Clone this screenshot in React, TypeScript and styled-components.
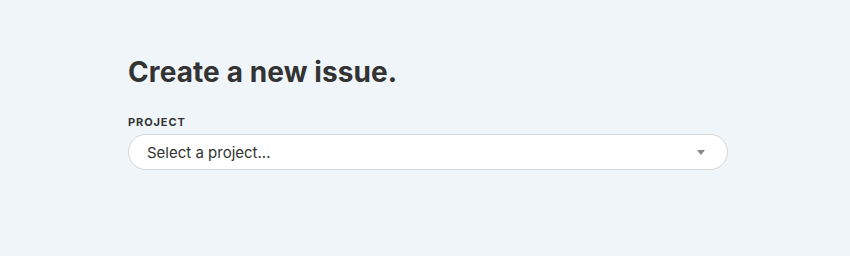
import React from 'react';
import styled, { createGlobalStyle } from 'styled-components';

const GlobalStyle = createGlobalStyle`
  html, body {
    margin: 0;
    padding: 0;
    background: #eff5f9;
    font-family: Inter, "Noto Sans", sans-serif;
    color: #333;
  }
`;

const Page = styled.main`
  padding: 52px 0 0 128px;
  width: 600px;
`;

const Title = styled.h1`
  margin: 0 0 23px;
  font-size: 28px;
  font-weight: 700;
  letter-spacing: 0.1px;
  line-height: 40px;
  color: #333;
`;

const Label = styled.label`
  display: block;
  font-size: 11px;
  font-weight: 700;
  letter-spacing: 0.9px;
  line-height: 14px;
  margin-bottom: 5px;
  color: #333;
`;

const SelectBox = styled.div`
  display: flex;
  align-items: center;
  justify-content: space-between;
  height: 36px;
  box-sizing: border-box;
  border: 1px solid #d6d6d6;
  border-radius: 18px;
  background: #fff;
  padding: 0 22px 0 18px;
  font-size: 15px;
  color: #333;
`;

const Caret = styled.span`
  width: 0;
  height: 0;
  border-left: 4px solid transparent;
  border-right: 4px solid transparent;
  border-top: 5px solid #888;
`;

export default function App() {
  return (
    <>
      <GlobalStyle />
      <Page>
        <Title>Create a new issue.</Title>
        <Label>PROJECT</Label>
        <SelectBox>
          <span>Select a project...</span>
          <Caret />
        </SelectBox>
      </Page>
    </>
  );
}
